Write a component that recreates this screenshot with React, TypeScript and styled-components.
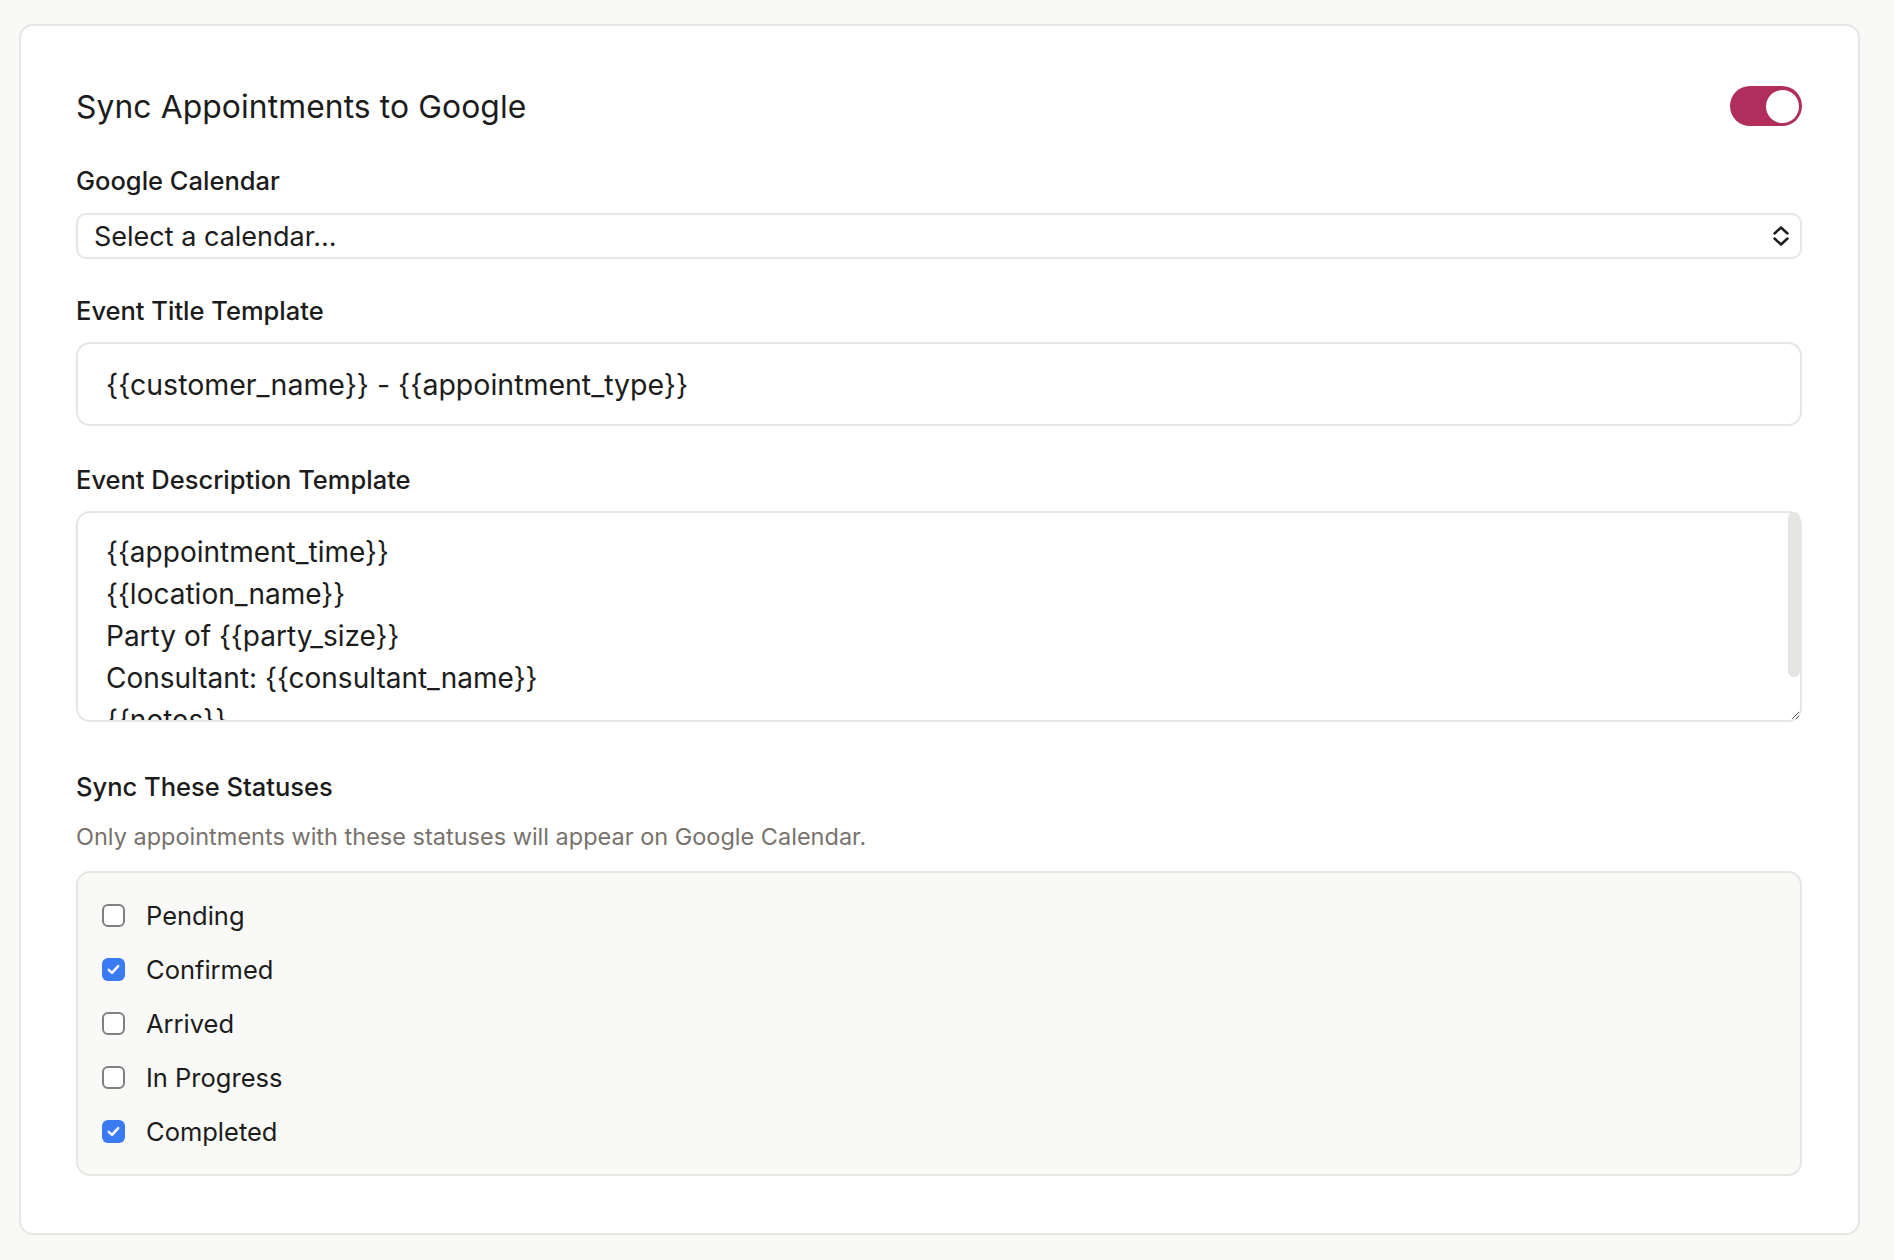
import { useState } from "react";
import styled, { createGlobalStyle } from "styled-components";

const GlobalStyle = createGlobalStyle`
  html, body {
    margin: 0;
    padding: 0;
    background: #f9f9f7;
  }
  body {
    font-family: Inter, "Noto Sans", "Liberation Sans", sans-serif;
    color: #1c1c1c;
  }
  * {
    box-sizing: border-box;
  }
`;

const Page = styled.div`
  padding: 24px 34px 28px 19px;
`;

const Card = styled.section`
  background: #ffffff;
  border: 2px solid #e6e6e4;
  border-radius: 14px;
  padding: 60px 56px 57px 55px;
`;

const HeaderRow = styled.div`
  display: flex;
  align-items: center;
  justify-content: space-between;
  height: 40px;
  margin-bottom: 40px;
`;

const Title = styled.h2`
  margin: 0;
  font-size: 31.8px;
  font-weight: 430;
  letter-spacing: 0.1px;
`;

const Toggle = styled.button<{ $on: boolean }>`
  width: 72px;
  height: 40px;
  border: none;
  border-radius: 999px;
  padding: 0 3px;
  display: flex;
  align-items: center;
  justify-content: ${({ $on }) => ($on ? "flex-end" : "flex-start")};
  background: ${({ $on }) => ($on ? "#b12e5c" : "#d4d4d2")};
  cursor: pointer;
`;

const Knob = styled.span`
  width: 33px;
  height: 33px;
  border-radius: 50%;
  background: #ffffff;
`;

const Field = styled.div<{ $gap?: number }>`
  display: flex;
  flex-direction: column;
  margin-bottom: ${({ $gap }) => $gap ?? 37}px;
`;

const Label = styled.label<{ $space?: number }>`
  font-size: 25.5px;
  font-weight: 500;
  line-height: 30px;
  margin-bottom: ${({ $space }) => $space ?? 17}px;
`;

const SelectBox = styled.div`
  height: 46px;
  border: 2px solid #e6e6e4;
  border-radius: 10px;
  padding: 0 10px 0 16px;
  display: flex;
  align-items: center;
  justify-content: space-between;
  font-size: 27px;
  cursor: pointer;
`;

const TextInput = styled.input`
  height: 84px;
  border: 2px solid #e6e6e4;
  border-radius: 14px;
  padding: 0 28px;
  font-family: inherit;
  font-size: 28.5px;
  color: #1c1c1c;
  background: #ffffff;
  outline: none;
`;

const AreaWrap = styled.div`
  position: relative;
  display: flex;
  flex-direction: column;
`;

const TextArea = styled.textarea`
  height: 211px;
  border: 2px solid #e6e6e4;
  border-radius: 14px;
  padding: 18px 28px;
  font-family: inherit;
  font-size: 28px;
  line-height: 42px;
  color: #1c1c1c;
  background: #ffffff;
  outline: none;
  resize: vertical;
  overflow: hidden;
`;

const ScrollThumb = styled.div`
  position: absolute;
  top: 1px;
  right: 2px;
  width: 12px;
  height: 165px;
  border-radius: 6px;
  background: #e4e4e2;
  pointer-events: none;
`;

const Helper = styled.p`
  margin: 0 0 19px;
  font-size: 23.5px;
  line-height: 30px;
  color: #77726d;
`;

const StatusBox = styled.div`
  background: #f9f9f7;
  border: 2px solid #e6e6e4;
  border-radius: 14px;
  padding: 15px 24px 16px;
  display: flex;
  flex-direction: column;
`;

const StatusRow = styled.label`
  height: 54px;
  display: flex;
  align-items: center;
  gap: 21px;
  font-size: 25.5px;
  cursor: pointer;
`;

const Check = styled.span<{ $checked: boolean }>`
  width: 23px;
  height: 23px;
  border-radius: 6px;
  flex-shrink: 0;
  display: flex;
  align-items: center;
  justify-content: center;
  background: ${({ $checked }) => ($checked ? "#3a7af2" : "#ffffff")};
  border: ${({ $checked }) => ($checked ? "none" : "2.5px solid #808080")};
`;

const statuses = [
  { name: "Pending", on: false },
  { name: "Confirmed", on: true },
  { name: "Arrived", on: false },
  { name: "In Progress", on: false },
  { name: "Completed", on: true },
];

const description = [
  "{{appointment_time}}",
  "{{location_name}}",
  "Party of {{party_size}}",
  "Consultant: {{consultant_name}}",
  "{{notes}}",
].join("\n");

function UpDownIcon() {
  return (
    <svg width="18" height="22" viewBox="0 0 18 22" fill="none">
      <path
        d="M2.5 8.5 L9 2.5 L15.5 8.5 M2.5 13.5 L9 19.5 L15.5 13.5"
        stroke="#1c1c1c"
        strokeWidth="2.4"
        strokeLinecap="round"
        strokeLinejoin="round"
      />
    </svg>
  );
}

function CheckMark() {
  return (
    <svg width="17" height="17" viewBox="0 0 16 16" fill="none">
      <path
        d="M3.5 8.3 L6.6 11.2 L12.4 4.8"
        stroke="#ffffff"
        strokeWidth="2.3"
        strokeLinecap="round"
        strokeLinejoin="round"
      />
    </svg>
  );
}

export default function App() {
  const [sync, setSync] = useState(true);
  const [checked, setChecked] = useState(statuses.map((s) => s.on));

  return (
    <Page>
      <GlobalStyle />
      <Card>
        <HeaderRow>
          <Title>Sync Appointments to Google</Title>
          <Toggle $on={sync} onClick={() => setSync(!sync)}>
            <Knob />
          </Toggle>
        </HeaderRow>

        <Field>
          <Label>Google Calendar</Label>
          <SelectBox>
            <span>Select a calendar...</span>
            <UpDownIcon />
          </SelectBox>
        </Field>

        <Field $gap={39}>
          <Label $space={16}>Event Title Template</Label>
          <TextInput defaultValue="{{customer_name}} - {{appointment_type}}" />
        </Field>

        <Field $gap={50}>
          <Label $space={16}>Event Description Template</Label>
          <AreaWrap>
            <TextArea defaultValue={description} />
            <ScrollThumb />
          </AreaWrap>
        </Field>

        <Field $gap={0}>
          <Label $space={20}>Sync These Statuses</Label>
          <Helper>
            Only appointments with these statuses will appear on Google Calendar.
          </Helper>
          <StatusBox>
            {statuses.map((s, i) => (
              <StatusRow
                key={s.name}
                onClick={() =>
                  setChecked(checked.map((c, j) => (j === i ? !c : c)))
                }
              >
                <Check $checked={checked[i]}>{checked[i] && <CheckMark />}</Check>
                {s.name}
              </StatusRow>
            ))}
          </StatusBox>
        </Field>
      </Card>
    </Page>
  );
}
